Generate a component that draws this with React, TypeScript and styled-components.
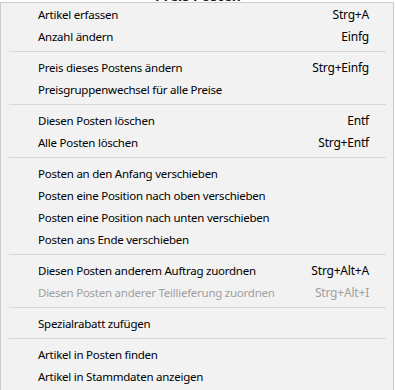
import styled, { createGlobalStyle } from 'styled-components'

interface IEntry {
  label: string;
  shortcut?: string;
  disabled?: boolean;
}

const groups: IEntry[][] = [
  [
    { label: 'Artikel erfassen', shortcut: 'Strg+A' },
    { label: 'Anzahl ändern', shortcut: 'Einfg' },
  ],
  [
    { label: 'Preis dieses Postens ändern', shortcut: 'Strg+Einfg' },
    { label: 'Preisgruppenwechsel für alle Preise' },
  ],
  [
    { label: 'Diesen Posten löschen', shortcut: 'Entf' },
    { label: 'Alle Posten löschen', shortcut: 'Strg+Entf' },
  ],
  [
    { label: 'Posten an den Anfang verschieben' },
    { label: 'Posten eine Position nach oben verschieben' },
    { label: 'Posten eine Position nach unten verschieben' },
    { label: 'Posten ans Ende verschieben' },
  ],
  [
    { label: 'Diesen Posten anderem Auftrag zuordnen', shortcut: 'Strg+Alt+A' },
    { label: 'Diesen Posten anderer Teillieferung zuordnen', shortcut: 'Strg+Alt+I', disabled: true },
  ],
  [
    { label: 'Spezialrabatt zufügen' },
  ],
  [
    { label: 'Artikel in Posten finden' },
    { label: 'Artikel in Stammdaten anzeigen' },
  ],
]

const App: React.FC = () => {
  return (
    <>
      <GlobalStyle />
      <StyledWindowStrip>
        <StyledWindowTitle>Preis Posten</StyledWindowTitle>
      </StyledWindowStrip>
      <StyledMenu>
        {groups.map((group, gi) => (
          <div key={gi}>
            {gi > 0 && <StyledSeparator />}
            {group.map((entry) => (
              <StyledItem key={entry.label} disabled={entry.disabled}>
                <StyledLabel>{entry.label}</StyledLabel>
                {entry.shortcut && <StyledShortcut>{entry.shortcut}</StyledShortcut>}
              </StyledItem>
            ))}
          </div>
        ))}
      </StyledMenu>
    </>
  )
}

export default App;

const GlobalStyle = createGlobalStyle`
  html, body {
    margin: 0;
    padding: 0;
    background: #ffffff;
    width: 395px;
    height: 390px;
    overflow: hidden;
  }
  body {
    font-family: "Noto Sans", "Open Sans", sans-serif;
  }
`

const StyledWindowStrip = styled.div`
  height: 2px;
  overflow: hidden;
  background: #ffffff;
  padding-left: 155px;
`

const StyledWindowTitle = styled.div`
  font-size: 14px;
  font-weight: bold;
  line-height: 14px;
  margin-top: -11px;
  color: #1a1a1a;
`

const StyledMenu = styled.div`
  width: 394px;
  height: 400px;
  background: #f2f2f2;
  border: 1px solid #cccccc;
  box-sizing: border-box;
  color: #000000;
`

const StyledItem = styled.div<{ disabled?: boolean }>`
  display: flex;
  align-items: center;
  justify-content: space-between;
  height: 22px;
  padding: 0 24px 0 37px;
  white-space: nowrap;
  color: ${({ disabled }) => (disabled ? '#a0a0a0' : '#000000')};
`

const StyledLabel = styled.span`
  font-size: 11.5px;
  letter-spacing: -0.25px;
`

const StyledShortcut = styled.span`
  margin-left: 16px;
  font-size: 12px;
  letter-spacing: -0.2px;
`

const StyledSeparator = styled.div`
  height: 1px;
  margin: 4px 7px 4px 8px;
  background: #d7d7d7;
`
